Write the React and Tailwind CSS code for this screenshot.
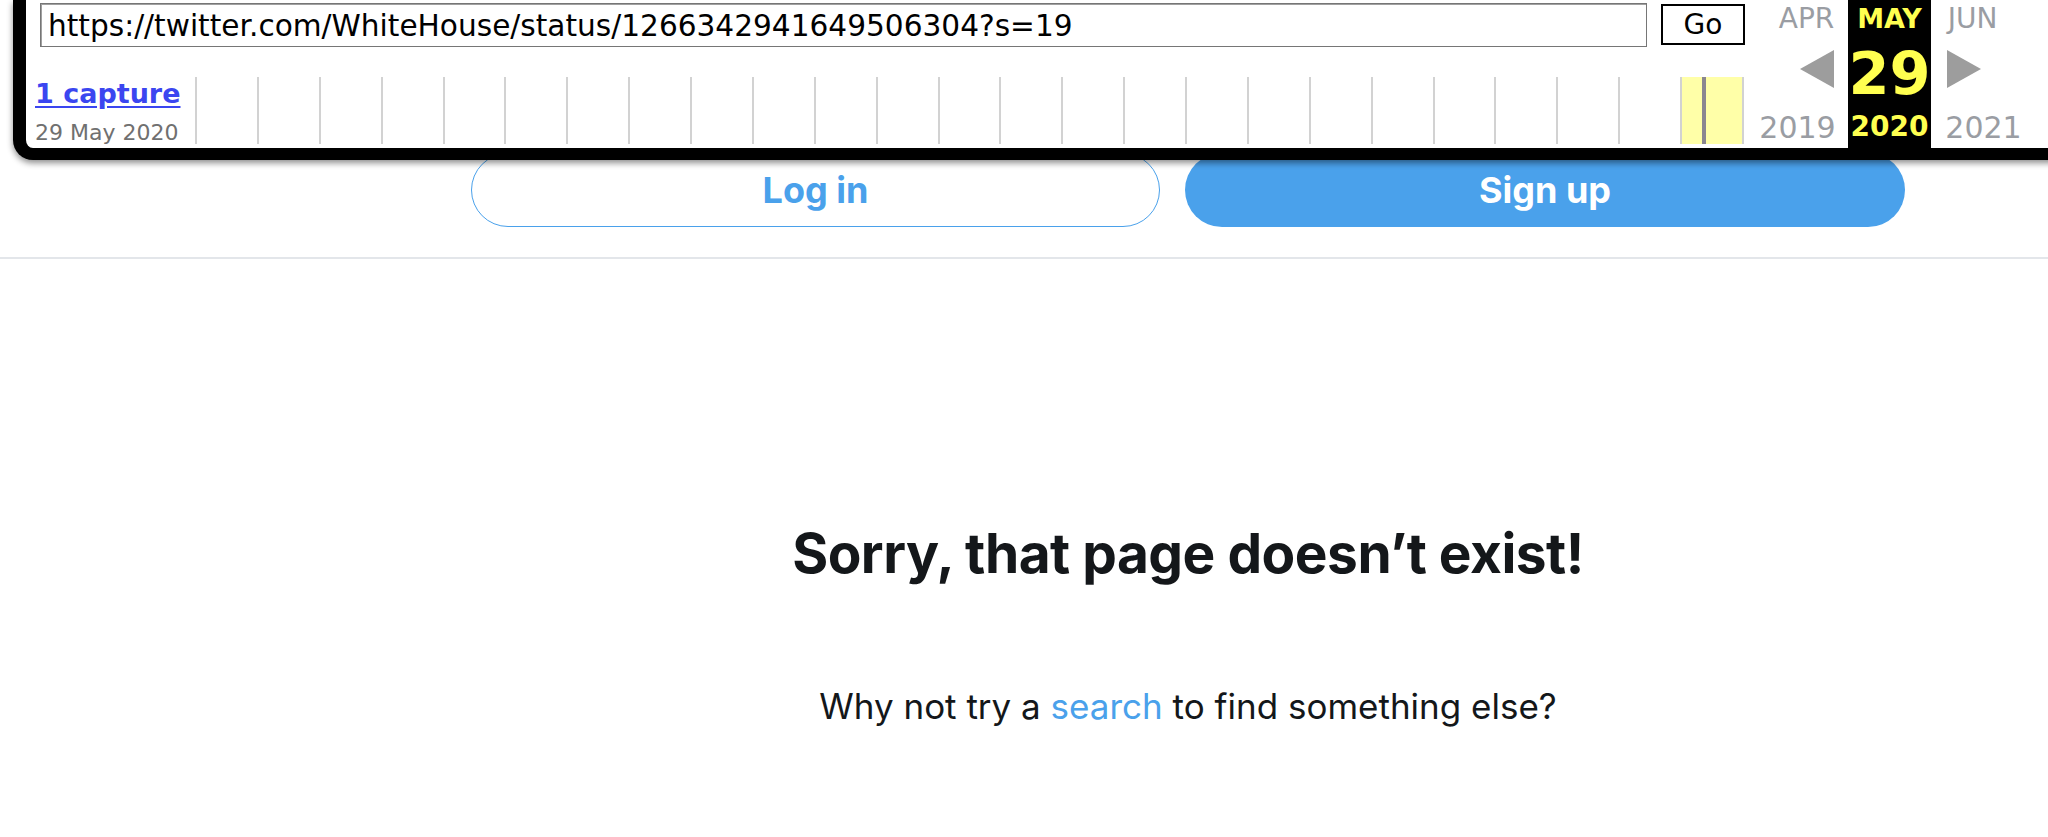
const CELLS = 25;

function Sparkline() {
  return (
    <div className="grid h-[67px] w-[1549px] grid-cols-[repeat(25,minmax(0,1fr))] border-r-2 border-[#d2d2d2]">
      {Array.from({ length: CELLS }).map((_, i) => (
        <div
          key={i}
          className={`relative border-l-2 border-[#d2d2d2] ${i === CELLS - 1 ? 'bg-[#ffffa8]' : ''}`}
        >
          {i === CELLS - 1 && <div className="ml-[20px] h-full w-[4px] bg-[#8a8690]" />}
        </div>
      ))}
    </div>
  );
}

function MonthColumn({ month, day, year, active, arrow }) {
  const tone = active ? 'text-[#ffff50]' : 'text-[#9a9da3]';
  const yearShift = arrow === 'left' ? 'mr-[18px]' : arrow === 'right' ? 'ml-[22px]' : '';
  return (
    <div className={`flex w-[83px] flex-col items-center ${active ? 'bg-black' : ''}`}>
      <div className={`mt-[5px] leading-none ${active ? 'text-[27px] font-bold' : 'text-[28px]'} ${tone}`}>{month}</div>
      <div className="mt-[12px] flex h-[58px] w-full">
        {arrow === 'left' && (
          <div className="flex w-full justify-end pr-[14px] pt-[5px]">
            <svg width="34" height="38" viewBox="0 0 34 38">
              <polygon points="34,0 34,38 0,19" fill="#9d9d9d" />
            </svg>
          </div>
        )}
        {arrow === 'right' && (
          <div className="flex w-full justify-start pl-[16px] pt-[5px]">
            <svg width="34" height="38" viewBox="0 0 34 38">
              <polygon points="0,0 0,38 34,19" fill="#9d9d9d" />
            </svg>
          </div>
        )}
        {day && <div className="w-full text-center text-[59px] font-bold leading-none text-[#ffff50]">{day}</div>}
      </div>
      <div
        className={`leading-none ${active ? 'mt-[11px] text-[28px] font-bold' : 'mt-[10px] text-[30px]'} ${yearShift} ${tone}`}
      >
        {year}
      </div>
    </div>
  );
}

function WaybackToolbar() {
  return (
    <div
      className="absolute left-[13px] right-[-40px] top-0 flex h-[160px] rounded-bl-[20px] border-b-[12px] border-l-[13px] border-black bg-white shadow-[0_3px_6px_rgba(0,0,0,0.45)]"
      style={{ fontFamily: '"DejaVu Sans", Verdana, sans-serif' }}
    >
      <div className="flex flex-col">
        <div className="flex items-start pl-[14px] pt-[3px]">
          <div className="flex h-[44px] w-[1607px] items-center overflow-hidden whitespace-nowrap border border-[#767676] bg-white pl-[7px] pt-[3px] text-[29.6px] text-black shadow-[inset_1px_1px_0_#a0a0a0]">
            https://twitter.com/WhiteHouse/status/1266342941649506304?s=19
          </div>
          <button className="ml-[14px] mt-[1px] flex h-[41px] w-[84px] items-center justify-center border-2 border-black bg-white text-[28px] leading-none text-black">
            Go
          </button>
        </div>
        <div className="mt-[30px] flex">
          <div className="w-[169px] pl-[9px]">
            <a href="#" className="mt-[3px] block text-[27px] font-bold leading-none text-[#3b46f0] underline underline-offset-[3px]">
              1 capture
            </a>
            <div className="mt-[15px] text-[22px] leading-none text-[#707070]">29 May 2020</div>
          </div>
          <Sparkline />
        </div>
      </div>
      <div className="ml-[20px] flex">
        <MonthColumn month="APR" year="2019" arrow="left" />
        <MonthColumn month="MAY" day="29" year="2020" active />
        <MonthColumn month="JUN" year="2021" arrow="right" />
      </div>
    </div>
  );
}

export default function App() {
  return (
    <div className="relative min-h-[837px] w-full overflow-hidden bg-white" style={{ fontFamily: 'Inter, "Noto Sans", sans-serif' }}>
      <header className="border-b-2 border-[#e3e6ea] pb-[30px] pt-[153px]">
        <div className="ml-[471px] flex w-[1434px] gap-[25px]">
          <button className="h-[74px] w-[689px] rounded-full border-[1.5px] border-[#4aa1eb] bg-white text-[36px] font-bold text-[#4aa1eb]">
            Log in
          </button>
          <button className="h-[74px] flex-1 rounded-full bg-[#4aa1eb] text-[36px] font-bold text-white">Sign up</button>
        </div>
      </header>
      <main className="ml-[471px] w-[1434px] text-center text-[#14171a]">
        <h1 className="mt-[267px] text-[55px] font-bold leading-none tracking-[-0.5px]">Sorry, that page doesn’t exist!</h1>
        <p className="mt-[108px] text-[35px] leading-none">
          Why not try a{' '}
          <a href="#" className="text-[#4aa1eb]">
            search
          </a>{' '}
          to find something else?
        </p>
      </main>
      <WaybackToolbar />
    </div>
  );
}
